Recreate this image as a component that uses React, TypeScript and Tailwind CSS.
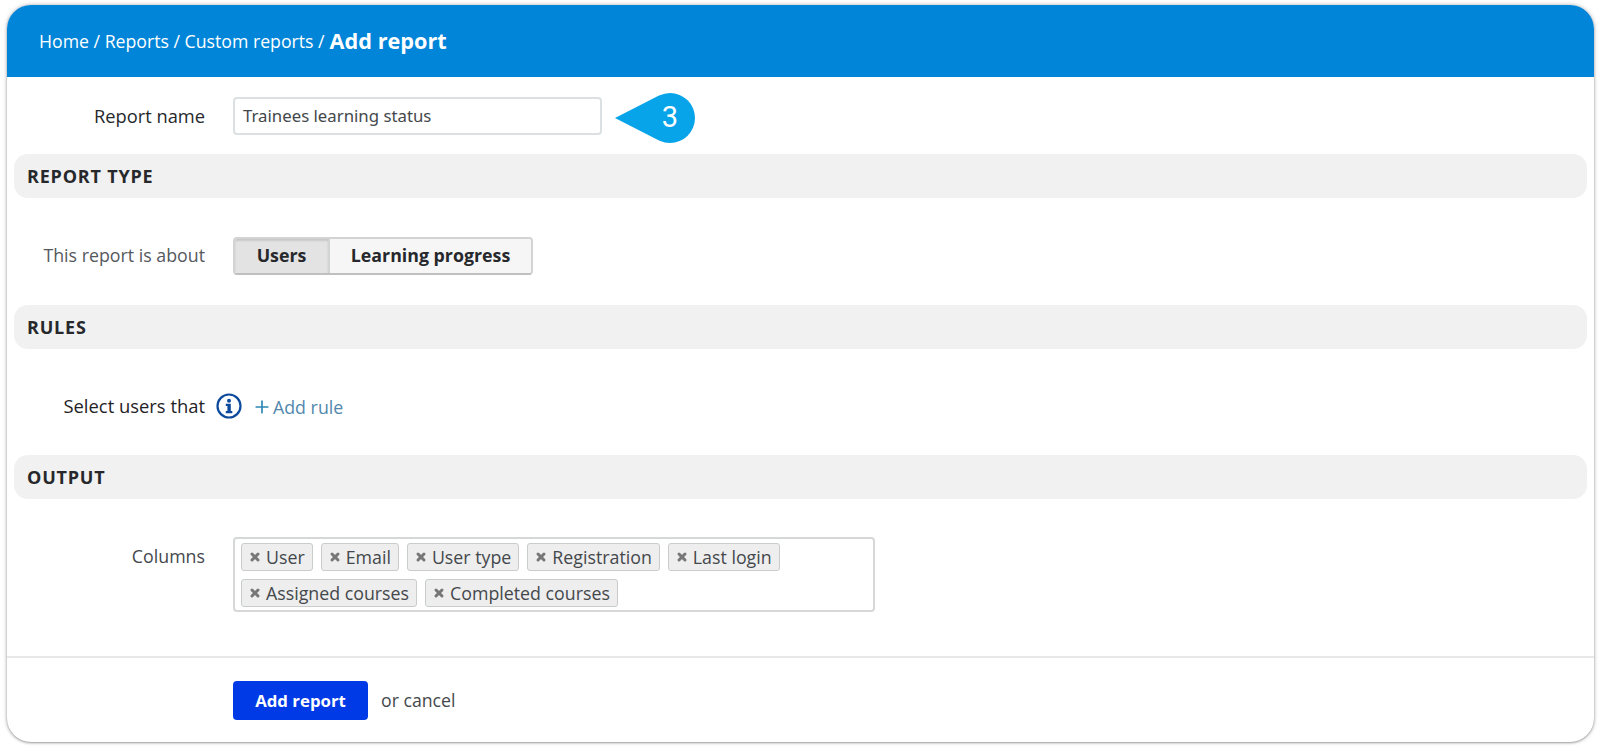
import { Plus, X } from "lucide-react";

const tagRows = [
  ["User", "Email", "User type", "Registration", "Last login"],
  ["Assigned courses", "Completed courses"],
];

function SectionBar({ title, className }: { title: string; className: string }) {
  return (
    <div className={`ml-[7px] mr-[7px] flex h-[44px] items-center rounded-[14px] bg-[#f1f1f1] pl-[13px] ${className}`}>
      <h2 className="text-[18px] font-bold tracking-[0.8px] text-[#26282b]">{title}</h2>
    </div>
  );
}

function Tag({ label }: { label: string }) {
  return (
    <span className="flex h-[28px] items-center gap-[5px] rounded-[3px] border border-[#c9cccc] bg-[#eeeeee] px-[7px] text-[17.8px] text-[#44484c]">
      <X className="h-[12px] w-[12px] text-[#777777]" strokeWidth={6} />
      {label}
    </span>
  );
}

export default function App() {
  return (
    <div className="h-[749px] bg-white pl-[7px] pt-[5px] font-['Open_Sans',sans-serif]">
      <div className="flex h-[737px] w-[1587px] flex-col overflow-hidden rounded-[24px] bg-white shadow-[0_0_4px_rgba(0,0,0,0.3),0_1px_2px_rgba(0,0,0,0.25)]">
        {/* Header */}
        <header className="flex h-[72px] shrink-0 items-center bg-[#0085d9] pl-[32px] text-[17.7px] text-white">
          <span>Home / Reports / Custom reports /</span>
          <span className="ml-[5px] text-[21.7px] font-bold">Add report</span>
        </header>

        {/* Report name */}
        <div className="mt-[20px] flex h-[37px] items-center">
          <label className="w-[198px] text-right text-[18.3px] text-[#26282b]">Report name</label>
          <div className="ml-[28px] flex h-[38px] w-[369px] items-center rounded-[4px] border-2 border-[#dbe0e3] bg-white pl-[8px] font-['Noto_Sans',sans-serif] text-[16.8px] text-[#44484c]">
            Trainees learning status
          </div>
          <div className="relative ml-[13px] mt-[4px] flex h-[50px] w-[80px] items-center justify-end">
            <svg className="absolute left-0 top-0" width="80" height="50" viewBox="0 0 80 50">
              <path d="M0 25 L44 2.5 Q50 0 55 0 A25 25 0 0 1 55 50 Q50 50 44 47.5 Z" fill="#07a4e9" />
            </svg>
            <span className="relative mr-[17px] font-['Roboto',sans-serif] text-[29px] text-white">3</span>
          </div>
        </div>

        <SectionBar title="REPORT TYPE" className="mt-[20px]" />

        {/* Report type */}
        <div className="mt-[39px] flex h-[37px] items-center">
          <span className="w-[198px] text-right text-[17.8px] text-[#55595d]">This report is about</span>
          <div className="ml-[28px] flex h-[38px] overflow-hidden rounded-[4px] border-2 border-[#d2d4d4] border-b-[#bfc1c1] text-[17.8px] font-bold text-[#26282b]">
            <button className="w-[93px] bg-[#e3e3e3] shadow-[inset_0_2px_2px_rgba(0,0,0,0.12)]">Users</button>
            <button className="w-[203px] border-l-2 border-[#d2d4d4] bg-[#f6f6f6]">Learning progress</button>
          </div>
        </div>

        <SectionBar title="RULES" className="mt-[31px]" />

        {/* Rules */}
        <div className="mt-[42px] flex h-[30px] items-center">
          <span className="w-[198px] text-right text-[18.4px] text-[#1f2225]">Select users that</span>
          <svg className="ml-[11px]" width="26" height="26" viewBox="0 0 26 26">
            <circle cx="13" cy="13" r="11.5" fill="none" stroke="#0d4a9c" strokeWidth="2.2" />
            <circle cx="13" cy="7.7" r="2" fill="#0d4a9c" />
            <path d="M9.8 10.8h5v7.2h1.5v2.2H9.8V18h1.6v-5H9.8z" fill="#0d4a9c" />
          </svg>
          <a className="ml-[10px] mt-[2px] flex items-center text-[17.8px] text-[#5288ad]">
            <Plus className="h-[20px] w-[20px] text-[#2b86b5]" strokeWidth={2} />
            <span className="ml-[1px]">Add rule</span>
          </a>
        </div>

        <SectionBar title="OUTPUT" className="mt-[34px]" />

        {/* Columns */}
        <div className="mt-[38px] flex items-start">
          <span className="mt-[6px] w-[198px] text-right text-[17.8px] text-[#44484c]">Columns</span>
          <div className="ml-[28px] flex h-[75px] w-[642px] flex-col gap-[8px] rounded-[4px] border-2 border-[#d6d8d8] px-[6px] pt-[4px]">
            {tagRows.map((row) => (
              <div key={row[0]} className="flex gap-[8px]">
                {row.map((t) => (
                  <Tag key={t} label={t} />
                ))}
              </div>
            ))}
          </div>
        </div>

        <div className="mt-[44px] h-[2px] w-full bg-[#e8e8e8]" />

        {/* Footer */}
        <div className="mt-[23px] flex items-center">
          <button className="ml-[226px] h-[39px] w-[135px] rounded-[4px] bg-[#0039e6] text-[16.8px] font-bold text-white">
            Add report
          </button>
          <span className="ml-[13px] text-[17.7px] text-[#44484c]">or cancel</span>
        </div>
      </div>
    </div>
  );
}
